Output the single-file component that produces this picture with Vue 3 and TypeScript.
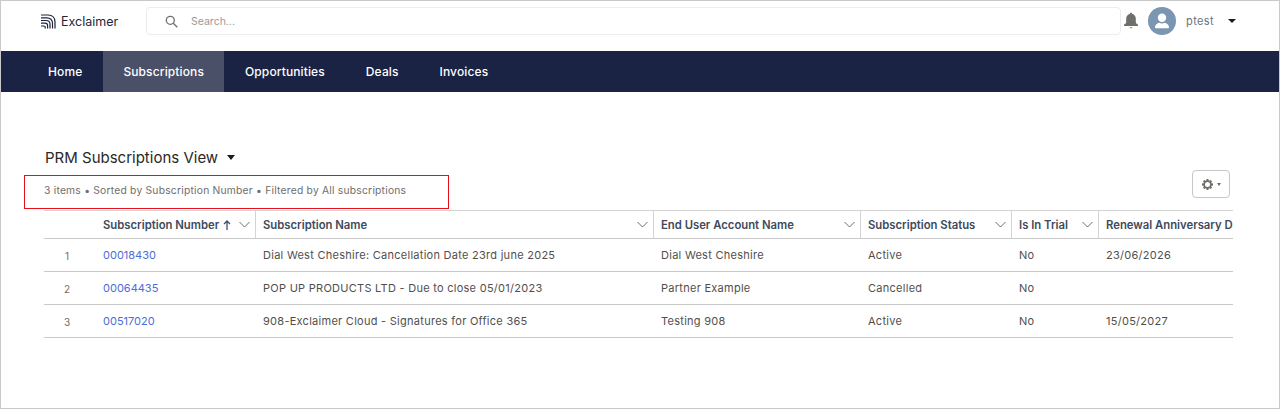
<script setup lang="ts">
interface Column { label: string; sorted?: boolean; chevron: boolean }
const columns: Column[] = [
  { label: 'Subscription Number', sorted: true, chevron: true },
  { label: 'Subscription Name', chevron: true },
  { label: 'End User Account Name', chevron: true },
  { label: 'Subscription Status', chevron: true },
  { label: 'Is In Trial', chevron: true },
  { label: 'Renewal Anniversary Date', chevron: false },
]
const rows = [
  ['00018430', 'Dial West Cheshire: Cancellation Date 23rd june 2025', 'Dial West Cheshire', 'Active', 'No', '23/06/2026'],
  ['00064435', 'POP UP PRODUCTS LTD - Due to close 05/01/2023', 'Partner Example', 'Cancelled', 'No', ''],
  ['00517020', '908-Exclaimer Cloud - Signatures for Office 365', 'Testing 908', 'Active', 'No', '15/05/2027'],
]
const navItems = ['Home', 'Subscriptions', 'Opportunities', 'Deals', 'Invoices']
</script>

<template>
  <div class="page">
    <header class="top">
      <div class="brand">
        <svg class="logo" width="16" height="15" viewBox="0 0 16 15" fill="none" stroke="#1f2338" stroke-width="1.200">
          <path d="M1 1h7c4.500 0 7 3 7 7v6.500" />
          <path d="M1 3.800h6c3 0 5.500 2.200 5.500 5.200v5.500" />
          <path d="M1 6.500h5c2.300 0 4 1.600 4 3.700v4.300" />
          <path d="M1 9.200h4c1.400 0 2.600 1.100 2.600 2.400v2.900" />
          <path d="M1 12h3c.7 0 1.200.5 1.200 1.100v1.400" />
        </svg>
        <span class="brand-name">Exclaimer</span>
      </div>
      <div class="search">
        <svg width="13" height="13" viewBox="0 0 13 13" fill="none" stroke="#706e6b" stroke-width="1.300">
          <circle cx="5.300" cy="5.300" r="4" />
          <path d="M8.300 8.300l4 4" />
        </svg>
        <span>Search...</span>
      </div>
      <svg class="bell" width="16" height="18" viewBox="0 0 16 18" fill="#706e6b">
        <path d="M8 .8c.7 0 1.200.5 1.200 1.100 2.300.5 3.600 2.300 3.600 4.700v3.300c0 1 .8 1.800 2.200 2.900v1.100H1v-1.100c1.400-1.100 2.200-1.900 2.200-2.900V6.600C3.200 4.200 4.500 2.400 6.800 1.900 6.800 1.300 7.300.8 8 .8z" />
        <path d="M6.600 15.200h2.800L8 16.800z" />
      </svg>
      <div class="avatar">
        <svg width="28" height="28" viewBox="0 0 28 28" fill="#fff">
          <circle cx="14" cy="10.800" r="4.200" />
          <path d="M7 20.200c0-2.600 2.400-3.900 4.400-4.400 1.600.9 3.600.9 5.200 0 2 .5 4.400 1.800 4.400 4.400 0 .6-.4 1-1 1H8c-.6 0-1-.4-1-1z" />
        </svg>
      </div>
      <span class="user">ptest</span>
      <span class="caret user-caret"></span>
    </header>

    <nav class="nav">
      <a v-for="item in navItems" :key="item" class="nav-item" :class="{ active: item === 'Subscriptions' }">{{ item }}</a>
    </nav>

    <main class="content">
      <div class="title-row">
        <h1>PRM Subscriptions View</h1>
        <span class="caret title-caret"></span>
      </div>
      <div class="meta-row">
        <span class="meta">3 items • Sorted by Subscription Number • Filtered by All subscriptions</span>
        <button class="gear" type="button">
          <svg width="11" height="11" viewBox="0 0 24 24" fill="#706e6b">
            <path fill-rule="evenodd" d="M10 0h4l.6 3.100 1.800.8L19 2.100 21.900 5l-1.800 2.600.8 1.800L24 10v4l-3.100.6-.8 1.800 1.800 2.600L19 21.900l-2.600-1.800-1.800.8L14 24h-4l-.6-3.100-1.800-.8L5 21.900 2.100 19l1.800-2.600-.8-1.800L0 14v-4l3.100-.6.800-1.800L2.100 5 5 2.100l2.600 1.800 1.800-.8zM12 6.500a5.500 5.500 0 1 0 0 11 5.500 5.500 0 0 0 0-11z" />
          </svg>
          <span class="caret gear-caret"></span>
        </button>
      </div>

      <div class="table">
        <div class="th num-head"></div>
        <div v-for="col in columns" :key="col.label" class="th">
          <span class="th-label">{{ col.label }}</span>
          <svg v-if="col.sorted" class="arrow" width="8" height="10" viewBox="0 0 8 10" fill="none" stroke="#3e5070" stroke-width="1.300">
            <path d="M4 10V1.500M1 4l3-3 3 3" />
          </svg>
          <svg v-if="col.chevron" class="chev" width="11" height="7" viewBox="0 0 11 7" fill="none" stroke="#706e6b" stroke-width="1">
            <path d="M.5 1l5 5 5-5" />
          </svg>
        </div>
        <template v-for="(row, i) in rows" :key="row[0]">
          <div class="td idx">{{ i + 1 }}</div>
          <div v-for="(cell, c) in row" :key="c" class="td" :class="{ link: c === 0 }">{{ cell }}</div>
        </template>
      </div>
    </main>

    <div class="highlight"></div>
  </div>
</template>

<style>
html, body { margin: 0; padding: 0; background: #fff; }
</style>

<style scoped>
.page {
  position: relative;
  box-sizing: border-box;
  width: 1280px;
  height: 409px;
  overflow: hidden;
  border: 1px solid #c9c9c9;
  background: #fff;
  font-family: Inter, "Noto Sans", sans-serif;
  color: #3e3e3c;
}
.top {
  display: flex;
  align-items: center;
  height: 50px;
  padding-bottom: 10px;
  box-sizing: border-box;
}
.brand {
  display: flex;
  align-items: center;
  gap: 5px;
  width: 145px;
  padding-left: 39px;
  box-sizing: border-box;
}
.brand-name {
  font-size: 12.500px;
  color: #23273a;
}
.search {
  display: flex;
  align-items: center;
  gap: 13px;
  box-sizing: border-box;
  width: 975px;
  height: 28px;
  padding-left: 18px;
  border: 1px solid #ececec;
  border-radius: 4px;
  font-size: 10.500px;
  color: #9a9a9a;
}
.bell { margin-left: 2px; }
.avatar {
  width: 28px;
  height: 28px;
  margin-left: 9px;
  border-radius: 50%;
  background: #7b96b2;
}
.avatar svg { display: block; }
.user {
  margin-left: 10px;
  font-size: 11px;
  letter-spacing: .4px;
  color: #6b7480;
}
.caret {
  width: 0;
  height: 0;
  border-left: 4px solid transparent;
  border-right: 4px solid transparent;
  border-top: 4px solid #1c1c1c;
}
.user-caret { margin-left: 14px; }
.nav {
  display: flex;
  height: 41px;
  padding-left: 26.500px;
  background: #1b2345;
}
.nav-item {
  display: flex;
  align-items: center;
  padding: 0 20.500px;
  font-size: 12px;
  font-weight: 500;
  letter-spacing: .12px;
  color: #fff;
}
.nav-item.active { background: #4a5068; }
.content {
  padding: 55px 46px 0 44px;
}
.title-row {
  display: flex;
  align-items: center;
  gap: 9px;
  height: 20px;
}
h1 {
  margin: 0;
  font-size: 15px;
  font-weight: 400;
  color: #2b2826;
}
.title-caret { border-left-width: 4.500px; border-right-width: 4.500px; border-top-width: 5px; }
.meta-row {
  display: flex;
  justify-content: space-between;
  align-items: flex-start;
  height: 43px;
  padding-top: 3px;
  box-sizing: border-box;
  margin-left: -1px;
}
.meta {
  margin-top: 14px;
  font-size: 10.300px;
  letter-spacing: .22px;
  color: #706e6b;
}
.gear {
  display: flex;
  align-items: center;
  justify-content: center;
  gap: 4px;
  box-sizing: border-box;
  width: 38px;
  height: 28px;
  padding: 0;
  margin-right: 3px;
  background: #fff;
  border: 1px solid #c9c7c5;
  border-radius: 4px;
}
.gear-caret {
  border-left-width: 2.500px;
  border-right-width: 2.500px;
  border-top-width: 3px;
  border-top-color: #706e6b;
}
.table {
  display: grid;
  grid-template-columns: 52px 160px 398px 207px 151px 87px 180px;
  width: 1189px;
  margin-left: -1px;
  overflow: hidden;
  border-top: 1px solid #d4d4d4;
}
.th {
  display: flex;
  align-items: center;
  box-sizing: border-box;
  height: 28px;
  padding: 0 5px 0 7px;
  border-right: 1px solid #d4d4d4;
  border-bottom: 1px solid #c9c9c9;
  font-size: 11.300px;
  font-weight: 600;
  color: #3e4a5c;
  white-space: nowrap;
  min-width: 0;
}
.num-head { border-right: 0; }
.th:last-child { border-right: 0; }
.th-label { flex: 0 0 auto; }
.arrow { margin-left: 4px; }
.chev { margin-left: auto; flex: none; }
.td {
  display: flex;
  align-items: center;
  box-sizing: border-box;
  height: 33px;
  padding: 0 7px 1px;
  border-bottom: 1px solid #c9c9c9;
  font-size: 11px;
  letter-spacing: .27px;
  color: #514f4d;
  white-space: nowrap;
}
.idx {
  justify-content: center;
  padding: 2px 6px 0 0;
  font-size: 10px;
  letter-spacing: 0;
  color: #706e6b;
}
.link { color: #4a6ed8; letter-spacing: 0; }
.highlight {
  position: absolute;
  left: 23px;
  top: 174px;
  width: 425px;
  height: 34px;
  box-sizing: border-box;
  border: 1px solid #e8101c;
}
</style>
